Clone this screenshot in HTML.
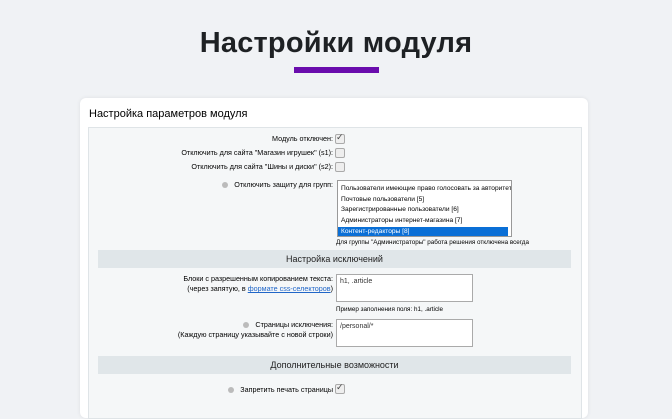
<!DOCTYPE html><html><head><meta charset="utf-8"><style>
body{margin:0;width:672px;height:403px;overflow:hidden;background:#f0f2f5;font-family:"Liberation Sans",sans-serif;position:relative}
.a{position:absolute}
h1{position:absolute;left:0;width:672px;top:27px;margin:0;text-align:center;font:bold 29px "Liberation Sans",sans-serif;color:#1e2124;letter-spacing:0.2px}
.bar{left:294px;top:67px;width:85px;height:6px;background:#6a0dad}
.card{left:80px;top:98px;width:508px;height:320px;background:#fff;border-radius:6px;box-shadow:0 0 4px rgba(0,0,0,.08)}
.panel{left:88px;top:127px;width:492px;height:290px;background:#f5f7f8;border:1px solid #dfe4e7}
.l{position:absolute;right:339px;font-size:7.2px;color:#000;text-align:right;white-space:nowrap;line-height:10px}
.cb{position:absolute;left:335px;width:8px;height:8px;border:1px solid #aaa;border-radius:2px;background:#eee}
.cb.c::after{content:"✓";position:absolute;left:0;top:-3px;font-size:9px;color:#444}
.sec{position:absolute;left:98px;width:473px;height:18px;background:#e0e6e9;text-align:center;font-size:9px;line-height:18px;color:#222}
.ta{position:absolute;left:336px;width:137px;height:28px;background:#fff;border:1px solid #aaa;font-size:7px;padding:3px;box-sizing:border-box;color:#333}
.q{display:inline-block;width:6px;height:6px;border-radius:50%;background:#bbb;margin-right:6px;vertical-align:middle}
.n{position:absolute;left:336px;font-size:6.3px;color:#000;white-space:nowrap}
.opt{padding-left:3px;white-space:nowrap;overflow:hidden}
</style></head><body>
<h1>Настройки модуля</h1>
<div class="a bar"></div>
<div class="a card"><div class="a" style="left:9px;top:10px;font-size:11px;color:#000">Настройка параметров модуля</div></div>
<div class="a panel"></div>
<div class="l" style="top:134px">Модуль отключен:</div><div class="cb c" style="top:134px"></div>
<div class="l" style="top:148px">Отключить для сайта "Магазин игрушек" (s1):</div><div class="cb" style="top:148px"></div>
<div class="l" style="top:162px">Отключить для сайта "Шины и диски" (s2):</div><div class="cb" style="top:162px"></div>
<div class="l" style="top:180px"><span class="q"></span>Отключить защиту для групп:</div>
<div class="a" style="left:337px;top:180px;width:175px;height:57px;background:#fff;border:1px solid #999;box-sizing:border-box;overflow:hidden;font-size:6.6px;line-height:10.8px;color:#000">
<div class="opt" style="margin-top:-8px">Пользователи имеющие право голосовать за рейтинг</div>
<div class="opt">Пользователи имеющие право голосовать за авторитет</div>
<div class="opt">Почтовые пользователи [5]</div>
<div class="opt">Зарегистрированные пользователи [6]</div>
<div class="opt">Администраторы интернет-магазина [7]</div>
<div class="opt" style="background:#0a6fd6;color:#fff;margin-right:3px">Контент-редакторы [8]</div></div>
<div class="n" style="top:239px">Для группы "Администраторы" работа решения отключена всегда</div>
<div class="sec" style="top:250px">Настройка исключений</div>
<div class="l" style="top:274px">Блоки с разрешенным копированием текста:<br>(через запятую, в <span style="color:#2066c8;text-decoration:underline">формате css-селекторов</span>)</div>
<div class="ta" style="top:274px">h1, .article</div>
<div class="n" style="top:306px">Пример заполнения поля: h1, .article</div>
<div class="l" style="top:320px"><span class="q"></span>Страницы исключения:<br>(Каждую страницу указывайте с новой строки)</div>
<div class="ta" style="top:319px">/personal/*</div>
<div class="sec" style="top:356px">Дополнительные возможности</div>
<div class="l" style="top:385px"><span class="q"></span>Запретить печать страницы</div><div class="cb c" style="top:384px"></div>
</body></html>
